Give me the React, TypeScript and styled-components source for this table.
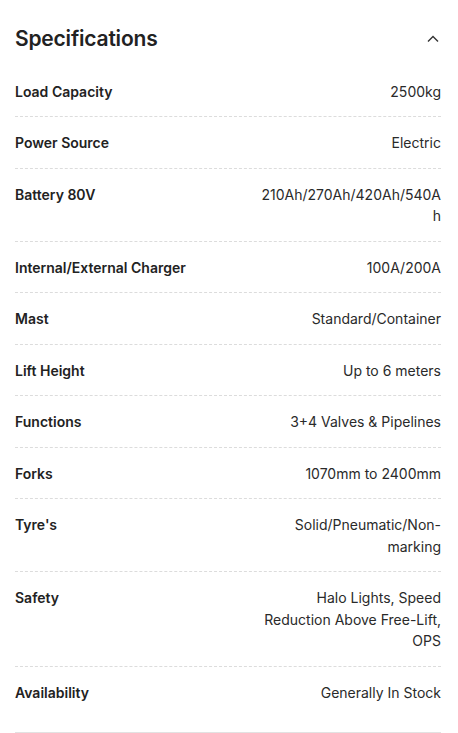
import React from "react";
import styled, { createGlobalStyle } from "styled-components";

const Global = createGlobalStyle`
  html, body { margin: 0; padding: 0; background: #fff; }
  body { font-family: Inter, "Noto Sans", Arial, sans-serif; color: #222; }
`;

const Section = styled.section`
  padding: 0 17px 0 15px;
`;

const Header = styled.div`
  display: flex;
  align-items: center;
  justify-content: space-between;
  padding: 24px 0 11.5px;
`;

const Title = styled.h2`
  margin: 0;
  font-size: 21px;
  line-height: 30px;
  font-weight: 600;
  letter-spacing: -0.2px;
  color: #222;
`;

const Toggle = styled.button`
  display: flex;
  align-items: center;
  justify-content: center;
  width: 16px;
  height: 16px;
  padding: 0;
  border: none;
  background: none;
  color: #333;
  cursor: pointer;
`;

const List = styled.dl`
  margin: 0;
  padding-bottom: 15px;
  border-bottom: 1px solid #e2e2e2;
`;

const Row = styled.div<{ $last?: boolean }>`
  display: flex;
  justify-content: space-between;
  gap: 20px;
  padding: 15px 0 14px;
  border-bottom: ${(p) => (p.$last ? "none" : "1px dashed #dcdcdc")};
  font-size: 14px;
  line-height: 21.5px;
`;

const Label = styled.dt`
  margin: 0;
  font-weight: 600;
  color: #222;
  white-space: nowrap;
`;

const Value = styled.dd`
  margin: 0;
  max-width: 180px;
  text-align: right;
  color: #2a2a2a;
  overflow-wrap: anywhere;
`;

const specs: [string, string][] = [
  ["Load Capacity", "2500kg"],
  ["Power Source", "Electric"],
  ["Battery 80V", "210Ah/270Ah/420Ah/540Ah"],
  ["Internal/External Charger", "100A/200A"],
  ["Mast", "Standard/Container"],
  ["Lift Height", "Up to 6 meters"],
  ["Functions", "3+4 Valves & Pipelines"],
  ["Forks", "1070mm to 2400mm"],
  ["Tyre's", "Solid/Pneumatic/Non-marking"],
  ["Safety", "Halo Lights, Speed Reduction Above Free-Lift, OPS"],
  ["Availability", "Generally In Stock"],
];

export default function App() {
  return (
    <>
      <Global />
      <Section>
        <Header>
          <Title>Specifications</Title>
          <Toggle aria-label="Collapse">
            <svg width="12" height="8" viewBox="0 0 12 8" fill="none">
              <polyline points="1,6.5 6,1.5 11,6.5" stroke="currentColor" strokeWidth="1.4" />
            </svg>
          </Toggle>
        </Header>
        <List>
          {specs.map(([k, v], i) => (
            <Row key={k} $last={i === specs.length - 1}>
              <Label>{k}</Label>
              <Value>{v}</Value>
            </Row>
          ))}
        </List>
      </Section>
    </>
  );
}
